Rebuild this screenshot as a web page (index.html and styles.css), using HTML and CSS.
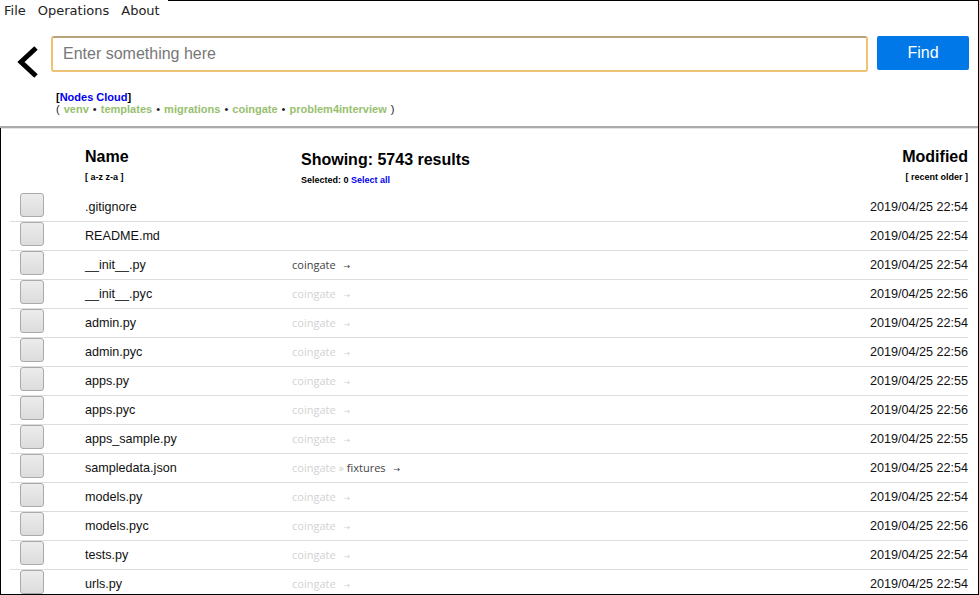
FILE: index.html
```html
<!DOCTYPE html>
<html>
<head>
<meta charset="utf-8">
<link rel="stylesheet" href="styles.css">
</head>
<body>
<div class="window">
  <div class="topbar">
    <nav class="menu">
      <span class="menu-item">File</span>
      <span class="menu-item">Operations</span>
      <span class="menu-item">About</span>
    </nav>
    <div class="topline"></div>
  </div>
  <header class="header">
    <div class="search-row">
      <svg class="back" width="24" height="34" viewBox="0 0 24 34">
        <path d="M20 3 L5 17 L20 31" fill="none" stroke="#000" stroke-width="5" stroke-linecap="butt" stroke-linejoin="miter"/>
      </svg>
      <input class="search" type="text" placeholder="Enter something here">
      <button class="find">Find</button>
    </div>
    <div class="cloud">
      <div class="cloud-title">[<span class="blue">Nodes Cloud</span>]</div>
      <div class="cloud-tags"><span class="paren">(</span> venv <span class="dot">•</span> templates <span class="dot">•</span> migrations <span class="dot">•</span> coingate <span class="dot">•</span> problem4interview <span class="paren">)</span></div>
    </div>
  </header>
  <main class="list">
    <div class="list-head">
      <div></div>
      <div class="col-name">
        <div class="h-title">Name</div>
        <div class="h-sort">[ a-z z-a ]</div>
      </div>
      <div class="col-show">
        <div class="h-title">Showing: 5743 results</div>
        <div class="h-sort sel">Selected: 0 <span class="blue">Select all</span></div>
      </div>
      <div class="col-mod">
        <div class="h-title">Modified</div>
        <div class="h-sort">[ recent older ]</div>
      </div>
    </div>
    <div class="row"><span class="cb"></span><span class="fname">.gitignore</span><span class="path"></span><span class="date">2019/04/25 22:54</span></div>
    <div class="row"><span class="cb"></span><span class="fname">README.md</span><span class="path"></span><span class="date">2019/04/25 22:54</span></div>
    <div class="row"><span class="cb"></span><span class="fname">__init__.py</span><span class="path"><span class="dark">coingate</span><span class="arrow dark">→</span></span><span class="date">2019/04/25 22:54</span></div>
    <div class="row"><span class="cb"></span><span class="fname">__init__.pyc</span><span class="path">coingate<span class="arrow">→</span></span><span class="date">2019/04/25 22:56</span></div>
    <div class="row"><span class="cb"></span><span class="fname">admin.py</span><span class="path">coingate<span class="arrow">→</span></span><span class="date">2019/04/25 22:54</span></div>
    <div class="row"><span class="cb"></span><span class="fname">admin.pyc</span><span class="path">coingate<span class="arrow">→</span></span><span class="date">2019/04/25 22:56</span></div>
    <div class="row"><span class="cb"></span><span class="fname">apps.py</span><span class="path">coingate<span class="arrow">→</span></span><span class="date">2019/04/25 22:55</span></div>
    <div class="row"><span class="cb"></span><span class="fname">apps.pyc</span><span class="path">coingate<span class="arrow">→</span></span><span class="date">2019/04/25 22:56</span></div>
    <div class="row"><span class="cb"></span><span class="fname">apps_sample.py</span><span class="path">coingate<span class="arrow">→</span></span><span class="date">2019/04/25 22:55</span></div>
    <div class="row"><span class="cb"></span><span class="fname">sampledata.json</span><span class="path">coingate » <span class="dark">fixtures</span><span class="arrow dark">→</span></span><span class="date">2019/04/25 22:54</span></div>
    <div class="row"><span class="cb"></span><span class="fname">models.py</span><span class="path">coingate<span class="arrow">→</span></span><span class="date">2019/04/25 22:54</span></div>
    <div class="row"><span class="cb"></span><span class="fname">models.pyc</span><span class="path">coingate<span class="arrow">→</span></span><span class="date">2019/04/25 22:56</span></div>
    <div class="row"><span class="cb"></span><span class="fname">tests.py</span><span class="path">coingate<span class="arrow">→</span></span><span class="date">2019/04/25 22:54</span></div>
    <div class="row"><span class="cb"></span><span class="fname">urls.py</span><span class="path">coingate<span class="arrow">→</span></span><span class="date">2019/04/25 22:54</span></div>
  </main>
</div>
</body>
</html>
```
FILE: styles.css
```css
* { box-sizing: border-box; }
html, body { margin: 0; padding: 0; background: #fff; }
body { font-family: "Liberation Sans", Arial, sans-serif; color: #111; }

.window {
  width: 979px;
  height: 595px;
  border-right: 1px solid #000;
  border-bottom: 1px solid #000;
  overflow: hidden;
  display: flex;
  flex-direction: column;
}

.topbar { display: flex; height: 21px; flex: none; }
.menu {
  display: flex;
  gap: 12px;
  padding-left: 4px;
  font-family: "DejaVu Sans", sans-serif;
  font-size: 13px;
  line-height: 21px;
  color: #222;
  padding-right: 8px;
}
.topline { flex: 1; border-top: 1px solid #000; }

.header {
  flex: none;
  height: 107px;
  border-bottom: 2px solid #aaa;
  box-shadow: 0 1px 0 #e4e4e4;
}
.search-row {
  display: flex;
  align-items: flex-start;
  margin-top: 15px;
  padding-left: 16px;
}
.back { margin-top: 9px; margin-right: 11px; flex: none; }
.search {
  width: 817px;
  height: 36px;
  border: 2px solid #efc173;
  border-top-color: #b9a27c;
  border-radius: 3px;
  padding: 0 10px;
  font-family: "Liberation Sans", Arial, sans-serif;
  font-size: 16px;
  color: #333;
  outline: none;
}
.search::placeholder { color: #777; }
.find {
  margin-left: 9px;
  width: 92px;
  height: 34px;
  border: none;
  border-radius: 2px;
  background: #0078e7;
  color: #fff;
  font-family: "Liberation Sans", Arial, sans-serif;
  font-size: 16px;
}

.cloud {
  margin-top: 12px;
  padding-left: 56px;
  font-size: 11px;
  font-weight: bold;
  line-height: 12px;
}
.blue { color: #0000ee; }
.cloud-title { color: #000; }
.cloud-tags { color: #97c06e; word-spacing: 1px; }
.cloud-tags .paren, .cloud-tags .dot { color: #222; font-weight: normal; }

.list {
  flex: 1;
  border-left: 1px solid #000;
  padding: 0 10px 0 9px;
}
.list-head {
  display: grid;
  grid-template-columns: 75px 216px 1fr auto;
  padding-top: 20px;
  height: 65px;
}
.h-title { font-size: 16px; font-weight: bold; line-height: 18px; color: #000; }
.h-sort { font-size: 9px; font-weight: bold; line-height: 10px; margin-top: 6px; color: #000; }
.col-show { padding-top: 3px; }
.col-mod { text-align: right; }

.row {
  display: grid;
  grid-template-columns: 75px 207px 1fr auto;
  align-items: start;
  height: 29px;
  border-bottom: 1px solid #ddd;
}
.cb {
  display: block;
  margin-left: 10px;
  width: 24px;
  height: 24px;
  border: 1px solid #aaa;
  border-radius: 3px;
  background: linear-gradient(#ececec, #dcdcdc);
}
.fname, .date {
  font-size: 12.6px;
  line-height: 24px;
  color: #111;
  padding-top: 2px;
}
.date { text-align: right; }
.path {
  font-family: "Open Sans", sans-serif;
  font-size: 11px;
  line-height: 24px;
  padding-top: 2px;
  color: #d2d2d2;
}
.path .dark { color: #444; }
.arrow { font-family: "DejaVu Sans", sans-serif; font-size: 8px; margin-left: 8px; }
```
